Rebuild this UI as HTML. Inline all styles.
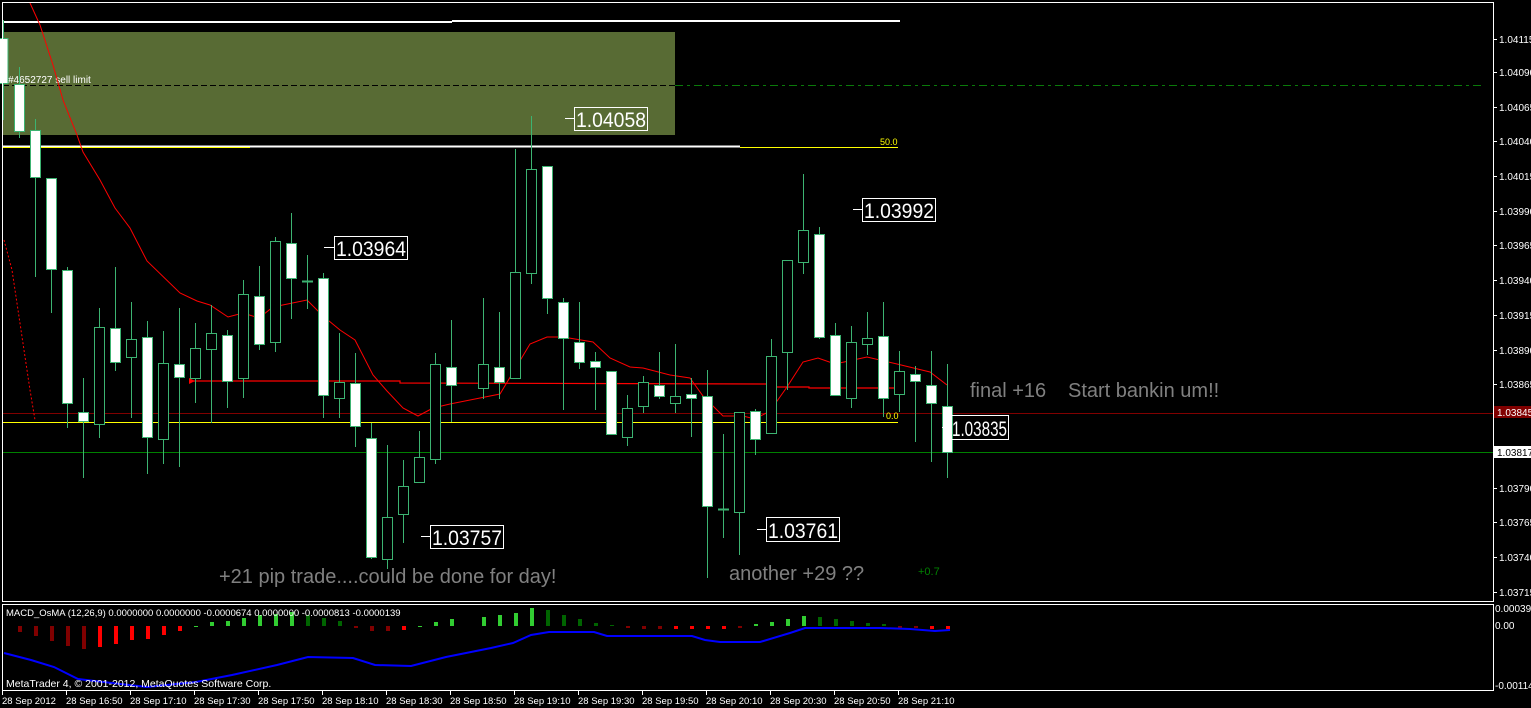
<!DOCTYPE html>
<html><head><meta charset="utf-8"><style>
html,body{margin:0;padding:0;background:#000;width:1531px;height:708px;overflow:hidden}
svg{display:block}
text{font-family:"Liberation Sans",sans-serif}
.ax{fill:#fff;font-size:10px}
.gt{fill:#808080;font-size:20px}
.lb{fill:#fff;font-size:21px}
</style></head><body>
<svg width="1531" height="708" viewBox="0 0 1531 708" xmlns="http://www.w3.org/2000/svg">
<rect width="1531" height="708" fill="#000"/>
<rect x="3" y="32" width="672" height="103" fill="#586b34"/>
<line x1="3" y1="22" x2="452" y2="22" stroke="#fff" stroke-width="2"/>
<line x1="452" y1="21" x2="900" y2="21" stroke="#fff" stroke-width="2"/>
<line x1="3" y1="85.5" x2="675" y2="85.5" stroke="#000" stroke-dasharray="6,3"/>
<line x1="675" y1="85.5" x2="1485" y2="85.5" stroke="#0a7a0a" stroke-dasharray="8,4,3,4"/>
<text x="8" y="83" style="font-size:10px" fill="#fff">#4652727 sell limit</text>
<line x1="3" y1="146.5" x2="740" y2="146.5" stroke="#fff" stroke-width="2"/>
<line x1="740" y1="147.5" x2="898" y2="147.5" stroke="#ffff00"/>
<line x1="3" y1="147.5" x2="250" y2="147.5" stroke="#ffff00"/>
<text x="880" y="145" fill="#ffff00" style="font-size:9px">50.0</text>
<line x1="3" y1="413.5" x2="1493" y2="413.5" stroke="#800000"/>
<line x1="3" y1="422.5" x2="898" y2="422.5" stroke="#ffff00"/>
<text x="886" y="419" fill="#ffff00" style="font-size:9px">0.0</text>
<line x1="3" y1="452.5" x2="1493" y2="452.5" stroke="#008000"/>
<polyline points="190,381 400,381 400,383 770,384 770,387 809,387 809,388 895,388" fill="none" stroke="#ff0000" stroke-width="1.2"/>
<path d="M189,378 L195,381 L189,384 Z" fill="#ff0000"/>
<polyline points="4,240 12,270 18,310 24,350 30,390 35,420" fill="none" stroke="#ff0000" stroke-dasharray="2,2"/>
<polyline points="30,3 40,25 53,65 63,100 77,135 83,152 100,180 115,208 130,228 147,261 180,293 197,301 210,305 228,317 243,313 259,318 273,307 307,300 323,316 340,330 355,340 373,375 387,391 403,408 418,416 433,408 450,404 470,400 500,394 530,344 547,337 563,337 593,342 610,358 630,367 643,368 670,375 690,378 703,396 723,416 743,416 755,419 770,411 787,387 803,362 818,358 835,364 867,357 897,364 930,372 947,385" fill="none" stroke="#ff0000" stroke-width="1"/>
<g stroke="#3cb371" stroke-width="1" shape-rendering="crispEdges">
<line x1="3.5" y1="20" x2="3.5" y2="120"/><rect x="-2" y="38.5" width="10" height="45" fill="#fff"/>
<line x1="19.5" y1="67" x2="19.5" y2="138"/><rect x="14.5" y="84.5" width="10" height="47" fill="#fff"/>
<line x1="35.5" y1="119" x2="35.5" y2="277"/><rect x="30.5" y="130.5" width="10" height="47" fill="#fff"/>
<line x1="51.5" y1="178" x2="51.5" y2="313"/><rect x="46.5" y="178.5" width="10" height="91" fill="#fff"/>
<line x1="67.5" y1="267" x2="67.5" y2="428"/><rect x="62.5" y="270.5" width="10" height="133" fill="#fff"/>
<line x1="83.5" y1="378" x2="83.5" y2="478"/><rect x="78.5" y="412.5" width="10" height="9" fill="#fff"/>
<line x1="99.5" y1="308" x2="99.5" y2="438"/><rect x="94.5" y="327.5" width="10" height="97" fill="#000"/>
<line x1="115.5" y1="267" x2="115.5" y2="371"/><rect x="110.5" y="328.5" width="10" height="34" fill="#fff"/>
<line x1="131.5" y1="302" x2="131.5" y2="418"/><rect x="126.5" y="339.5" width="10" height="18" fill="#000"/>
<line x1="147.5" y1="321" x2="147.5" y2="474"/><rect x="142.5" y="337.5" width="10" height="100" fill="#fff"/>
<line x1="163.5" y1="331" x2="163.5" y2="464"/><rect x="158.5" y="363.5" width="10" height="76" fill="#000"/>
<line x1="179.5" y1="308" x2="179.5" y2="467"/><rect x="174.5" y="364.5" width="10" height="13" fill="#fff"/>
<line x1="195.5" y1="323" x2="195.5" y2="403"/><rect x="190.5" y="348.5" width="10" height="30" fill="#000"/>
<line x1="211.5" y1="305" x2="211.5" y2="423"/><rect x="206.5" y="333.5" width="10" height="16" fill="#000"/>
<line x1="227.5" y1="330" x2="227.5" y2="408"/><rect x="222.5" y="335.5" width="10" height="46" fill="#fff"/>
<line x1="243.5" y1="280" x2="243.5" y2="398"/><rect x="238.5" y="294.5" width="10" height="84" fill="#000"/>
<line x1="259.5" y1="266" x2="259.5" y2="350"/><rect x="254.5" y="296.5" width="10" height="48" fill="#fff"/>
<line x1="275.5" y1="237" x2="275.5" y2="352"/><rect x="270.5" y="241.5" width="10" height="101" fill="#000"/>
<line x1="291.5" y1="213" x2="291.5" y2="319"/><rect x="286.5" y="243.5" width="10" height="35" fill="#fff"/>
<line x1="307.5" y1="255" x2="307.5" y2="309"/><line x1="302" y1="281.5" x2="313" y2="281.5" stroke-width="2"/>
<line x1="323.5" y1="273" x2="323.5" y2="418"/><rect x="318.5" y="278.5" width="10" height="117" fill="#fff"/>
<line x1="339.5" y1="333" x2="339.5" y2="418"/><rect x="334.5" y="382.5" width="10" height="16" fill="#000"/>
<line x1="355.5" y1="353" x2="355.5" y2="447"/><rect x="350.5" y="383.5" width="10" height="43" fill="#fff"/>
<line x1="371.5" y1="423" x2="371.5" y2="559"/><rect x="366.5" y="438.5" width="10" height="119" fill="#fff"/>
<line x1="387.5" y1="445" x2="387.5" y2="569"/><rect x="382.5" y="517.5" width="10" height="42" fill="#000"/>
<line x1="403.5" y1="460" x2="403.5" y2="543"/><rect x="398.5" y="486.5" width="10" height="28" fill="#000"/>
<line x1="419.5" y1="431" x2="419.5" y2="482"/><rect x="414.5" y="457.5" width="10" height="25" fill="#000"/>
<line x1="435.5" y1="353" x2="435.5" y2="464"/><rect x="430.5" y="364.5" width="10" height="95" fill="#000"/>
<line x1="451.5" y1="320" x2="451.5" y2="422"/><rect x="446.5" y="367.5" width="10" height="18" fill="#fff"/>
<line x1="483.5" y1="298" x2="483.5" y2="399"/><rect x="478.5" y="364.5" width="10" height="24" fill="#000"/>
<line x1="499.5" y1="312" x2="499.5" y2="399"/><rect x="494.5" y="367.5" width="10" height="15" fill="#fff"/>
<line x1="515.5" y1="149" x2="515.5" y2="378"/><rect x="510.5" y="272.5" width="10" height="106" fill="#000"/>
<line x1="531.5" y1="116" x2="531.5" y2="284"/><rect x="526.5" y="169.5" width="10" height="104" fill="#000"/>
<line x1="547.5" y1="166" x2="547.5" y2="314"/><rect x="542.5" y="166.5" width="10" height="132" fill="#fff"/>
<line x1="563.5" y1="298" x2="563.5" y2="410"/><rect x="558.5" y="302.5" width="10" height="36" fill="#fff"/>
<line x1="579.5" y1="302" x2="579.5" y2="369"/><rect x="574.5" y="342.5" width="10" height="20" fill="#fff"/>
<line x1="595.5" y1="352" x2="595.5" y2="410"/><rect x="590.5" y="361.5" width="10" height="6" fill="#fff"/>
<line x1="611.5" y1="371" x2="611.5" y2="434"/><rect x="606.5" y="371.5" width="10" height="63" fill="#fff"/>
<line x1="627.5" y1="395" x2="627.5" y2="446"/><rect x="622.5" y="408.5" width="10" height="29" fill="#000"/>
<line x1="643.5" y1="376" x2="643.5" y2="413"/><rect x="638.5" y="382.5" width="10" height="24" fill="#000"/>
<line x1="659.5" y1="352" x2="659.5" y2="399"/><rect x="654.5" y="385.5" width="10" height="11" fill="#fff"/>
<line x1="675.5" y1="344" x2="675.5" y2="413"/><rect x="670.5" y="396.5" width="10" height="7" fill="#000"/>
<line x1="691.5" y1="378" x2="691.5" y2="437"/><rect x="686.5" y="394.5" width="10" height="4" fill="#fff"/>
<line x1="707.5" y1="370" x2="707.5" y2="578"/><rect x="702.5" y="396.5" width="10" height="110" fill="#fff"/>
<line x1="723.5" y1="434" x2="723.5" y2="538"/><line x1="718" y1="509.5" x2="729" y2="509.5" stroke-width="2"/>
<line x1="739.5" y1="412" x2="739.5" y2="555"/><rect x="734.5" y="412.5" width="10" height="100" fill="#000"/>
<line x1="755.5" y1="409" x2="755.5" y2="455"/><rect x="750.5" y="411.5" width="10" height="28" fill="#fff"/>
<line x1="771.5" y1="339" x2="771.5" y2="433"/><rect x="766.5" y="356.5" width="10" height="77" fill="#000"/>
<line x1="787.5" y1="260" x2="787.5" y2="390"/><rect x="782.5" y="260.5" width="10" height="92" fill="#000"/>
<line x1="803.5" y1="174" x2="803.5" y2="274"/><rect x="798.5" y="230.5" width="10" height="32" fill="#000"/>
<line x1="819.5" y1="227" x2="819.5" y2="339"/><rect x="814.5" y="234.5" width="10" height="103" fill="#fff"/>
<line x1="835.5" y1="323" x2="835.5" y2="395"/><rect x="830.5" y="335.5" width="10" height="60" fill="#fff"/>
<line x1="851.5" y1="326" x2="851.5" y2="408"/><rect x="846.5" y="342.5" width="10" height="56" fill="#000"/>
<line x1="867.5" y1="312" x2="867.5" y2="355"/><rect x="862.5" y="338.5" width="10" height="6" fill="#000"/>
<line x1="883.5" y1="302" x2="883.5" y2="417"/><rect x="878.5" y="336.5" width="10" height="62" fill="#fff"/>
<line x1="899.5" y1="351" x2="899.5" y2="412"/><rect x="894.5" y="371.5" width="10" height="23" fill="#000"/>
<line x1="915.5" y1="366" x2="915.5" y2="442"/><rect x="910.5" y="374.5" width="10" height="7" fill="#fff"/>
<line x1="931.5" y1="351" x2="931.5" y2="462"/><rect x="926.5" y="385.5" width="10" height="18" fill="#fff"/>
<line x1="947.5" y1="364" x2="947.5" y2="478"/><rect x="942.5" y="406.5" width="10" height="46" fill="#fff"/>
</g>
<g stroke="#fff" fill="none" shape-rendering="crispEdges">
<line x1="565" y1="118.5" x2="574" y2="118.5"/><rect x="574.5" y="107.5" width="73" height="23"/>
<line x1="324" y1="247.5" x2="334" y2="247.5"/><rect x="334.5" y="236.5" width="73" height="23"/>
<line x1="421" y1="536.5" x2="430" y2="536.5"/><rect x="430.5" y="525.5" width="73" height="23"/>
<line x1="757" y1="529.5" x2="766" y2="529.5"/><rect x="766.5" y="517.5" width="73" height="24"/>
<line x1="853" y1="209.5" x2="862" y2="209.5"/><rect x="862.5" y="198.5" width="73" height="23"/>
<line x1="942" y1="427.5" x2="950" y2="427.5"/><rect x="950.5" y="415.5" width="58" height="24"/>
</g>
<g class="lb">
<text x="576" y="127" textLength="70" lengthAdjust="spacingAndGlyphs">1.04058</text>
<text x="336" y="256" textLength="70" lengthAdjust="spacingAndGlyphs">1.03964</text>
<text x="432" y="545" textLength="70" lengthAdjust="spacingAndGlyphs">1.03757</text>
<text x="768" y="538" textLength="70" lengthAdjust="spacingAndGlyphs">1.03761</text>
<text x="864" y="218" textLength="70" lengthAdjust="spacingAndGlyphs">1.03992</text>
<text x="952" y="436" textLength="55" lengthAdjust="spacingAndGlyphs">1.03835</text>
</g>
<text class="gt" x="219" y="583">+21 pip trade....could be done for day!</text>
<text class="gt" x="729" y="580">another +29 ??</text>
<text class="gt" x="970" y="397">final +16</text>
<text class="gt" x="1068" y="397">Start bankin um!!</text>
<text x="918" y="575" fill="#008000" style="font-size:11px">+0.7</text>
<rect x="2.5" y="2.5" width="1491" height="599" fill="none" stroke="#fff"/>
<rect x="2.5" y="604.5" width="1491" height="86" fill="none" stroke="#fff"/>
<g class="ax">
<text x="1499" y="43">1.04115</text><text x="1499" y="76">1.04090</text><text x="1499" y="111">1.04065</text>
<text x="1499" y="145">1.04040</text><text x="1499" y="180">1.04015</text><text x="1499" y="215">1.03990</text>
<text x="1499" y="249">1.03965</text><text x="1499" y="284">1.03940</text><text x="1499" y="319">1.03915</text>
<text x="1499" y="354">1.03890</text><text x="1499" y="388">1.03865</text><text x="1499" y="453">1.03840</text>
<text x="1499" y="492">1.03790</text><text x="1499" y="526">1.03765</text><text x="1499" y="561">1.03740</text>
<text x="1499" y="596">1.03715</text>
<text x="1495" y="612">0.000392</text><text x="1495" y="629">0.00</text><text x="1495" y="689">-0.00114</text>
</g>
<g stroke="#fff" shape-rendering="crispEdges">
<line x1="1493" y1="39.5" x2="1497" y2="39.5"/><line x1="1493" y1="72.5" x2="1497" y2="72.5"/><line x1="1493" y1="107.5" x2="1497" y2="107.5"/>
<line x1="1493" y1="141.5" x2="1497" y2="141.5"/><line x1="1493" y1="176.5" x2="1497" y2="176.5"/><line x1="1493" y1="211.5" x2="1497" y2="211.5"/>
<line x1="1493" y1="245.5" x2="1497" y2="245.5"/><line x1="1493" y1="280.5" x2="1497" y2="280.5"/><line x1="1493" y1="315.5" x2="1497" y2="315.5"/>
<line x1="1493" y1="350.5" x2="1497" y2="350.5"/><line x1="1493" y1="384.5" x2="1497" y2="384.5"/><line x1="1493" y1="488.5" x2="1497" y2="488.5"/>
<line x1="1493" y1="522.5" x2="1497" y2="522.5"/><line x1="1493" y1="557.5" x2="1497" y2="557.5"/><line x1="1493" y1="592.5" x2="1497" y2="592.5"/>
</g>
<rect x="1494" y="406" width="37" height="12" fill="#800000"/>
<text x="1497" y="416" fill="#fff" style="font-size:10px">1.03845</text>
<rect x="1494" y="446" width="37" height="12" fill="#fff"/>
<text x="1497" y="456" fill="#000" style="font-size:10px">1.03817</text>
<g shape-rendering="crispEdges">
<rect x="18" y="626" width="4" height="6" fill="#800000"/><rect x="34" y="626" width="4" height="10" fill="#800000"/>
<rect x="50" y="626" width="4" height="15" fill="#800000"/><rect x="66" y="626" width="4" height="20" fill="#800000"/>
<rect x="82" y="626" width="4" height="23" fill="#800000"/><rect x="98" y="626" width="4" height="21" fill="#ff0000"/>
<rect x="114" y="626" width="4" height="18" fill="#ff0000"/><rect x="130" y="626" width="4" height="14" fill="#ff0000"/>
<rect x="146" y="626" width="4" height="13" fill="#ff0000"/><rect x="162" y="626" width="4" height="9" fill="#ff0000"/>
<rect x="178" y="626" width="4" height="5" fill="#ff0000"/><rect x="194" y="626" width="4" height="1" fill="#32cd32"/>
<rect x="210" y="622" width="4" height="4" fill="#32cd32"/><rect x="226" y="621" width="4" height="5" fill="#32cd32"/>
<rect x="242" y="618" width="4" height="8" fill="#32cd32"/><rect x="258" y="615" width="4" height="11" fill="#32cd32"/>
<rect x="274" y="614" width="4" height="12" fill="#32cd32"/><rect x="290" y="612" width="4" height="14" fill="#32cd32"/>
<rect x="306" y="615" width="4" height="11" fill="#006400"/><rect x="322" y="618" width="4" height="8" fill="#006400"/>
<rect x="338" y="621" width="4" height="5" fill="#006400"/><rect x="354" y="626" width="4" height="2" fill="#800000"/>
<rect x="370" y="626" width="4" height="5" fill="#800000"/><rect x="386" y="626" width="4" height="5" fill="#800000"/>
<rect x="402" y="626" width="4" height="4" fill="#ff0000"/><rect x="418" y="626" width="4" height="1" fill="#32cd32"/>
<rect x="434" y="622" width="4" height="4" fill="#32cd32"/><rect x="450" y="619" width="4" height="7" fill="#32cd32"/>
<rect x="482" y="617" width="4" height="9" fill="#32cd32"/><rect x="498" y="615" width="4" height="11" fill="#32cd32"/>
<rect x="514" y="613" width="4" height="13" fill="#32cd32"/><rect x="530" y="608" width="4" height="18" fill="#32cd32"/>
<rect x="546" y="610" width="4" height="16" fill="#006400"/><rect x="562" y="615" width="4" height="11" fill="#006400"/>
<rect x="578" y="619" width="4" height="7" fill="#006400"/><rect x="594" y="623" width="4" height="3" fill="#006400"/>
<rect x="610" y="625" width="4" height="1" fill="#006400"/><rect x="626" y="626" width="4" height="2" fill="#800000"/>
<rect x="642" y="626" width="4" height="3" fill="#800000"/><rect x="658" y="626" width="4" height="3" fill="#800000"/>
<rect x="674" y="626" width="4" height="3" fill="#ff0000"/><rect x="690" y="626" width="4" height="3" fill="#ff0000"/>
<rect x="706" y="626" width="4" height="3" fill="#ff0000"/><rect x="722" y="626" width="4" height="3" fill="#ff0000"/>
<rect x="738" y="626" width="4" height="2" fill="#800000"/><rect x="754" y="624" width="4" height="2" fill="#32cd32"/>
<rect x="770" y="622" width="4" height="4" fill="#32cd32"/><rect x="786" y="619" width="4" height="7" fill="#32cd32"/>
<rect x="802" y="616" width="4" height="10" fill="#32cd32"/><rect x="818" y="617" width="4" height="9" fill="#006400"/>
<rect x="834" y="619" width="4" height="7" fill="#006400"/><rect x="850" y="621" width="4" height="5" fill="#006400"/>
<rect x="866" y="623" width="4" height="3" fill="#006400"/><rect x="882" y="624" width="4" height="2" fill="#006400"/>
<rect x="898" y="626" width="4" height="2" fill="#800000"/><rect x="914" y="626" width="4" height="2" fill="#800000"/>
<rect x="930" y="626" width="4" height="3" fill="#ff0000"/><rect x="946" y="626" width="4" height="3" fill="#ff0000"/>
</g>
<polyline points="4,653 31,660 54,667 78,679 112,683 147,687 196,682 232,675 277,665 308,657 353,658 375,665 411,666 446,657 491,648 513,643 531,635 549,632 594,632 607,636 692,636 705,640 720,642 760,642 790,633 805,628 880,628 910,629 935,631 950,630" fill="none" stroke="#0000ff" stroke-width="2"/>
<text x="6" y="616" fill="#fff" style="font-size:9.5px">MACD_OsMA (12,26,9) 0.0000000 0.0000000 -0.0000674 0.0000000 -0.0000813 -0.0000139</text>
<text x="6" y="687" fill="#fff" style="font-size:10.5px">MetaTrader 4, © 2001-2012, MetaQuotes Software Corp.</text>
<g stroke="#fff" shape-rendering="crispEdges">
<line x1="2.5" y1="691" x2="2.5" y2="695"/><line x1="66.5" y1="691" x2="66.5" y2="695"/><line x1="130.5" y1="691" x2="130.5" y2="695"/>
<line x1="194.5" y1="691" x2="194.5" y2="695"/><line x1="258.5" y1="691" x2="258.5" y2="695"/><line x1="322.5" y1="691" x2="322.5" y2="695"/>
<line x1="386.5" y1="691" x2="386.5" y2="695"/><line x1="450.5" y1="691" x2="450.5" y2="695"/><line x1="514.5" y1="691" x2="514.5" y2="695"/>
<line x1="578.5" y1="691" x2="578.5" y2="695"/><line x1="642.5" y1="691" x2="642.5" y2="695"/><line x1="706.5" y1="691" x2="706.5" y2="695"/>
<line x1="770.5" y1="691" x2="770.5" y2="695"/><line x1="834.5" y1="691" x2="834.5" y2="695"/><line x1="898.5" y1="691" x2="898.5" y2="695"/>
</g>
<g fill="#fff" style="font-size:9.5px">
<text x="2" y="704">28 Sep 2012</text><text x="66" y="704">28 Sep 16:50</text><text x="130" y="704">28 Sep 17:10</text>
<text x="194" y="704">28 Sep 17:30</text><text x="258" y="704">28 Sep 17:50</text><text x="322" y="704">28 Sep 18:10</text>
<text x="386" y="704">28 Sep 18:30</text><text x="450" y="704">28 Sep 18:50</text><text x="514" y="704">28 Sep 19:10</text>
<text x="578" y="704">28 Sep 19:30</text><text x="642" y="704">28 Sep 19:50</text><text x="706" y="704">28 Sep 20:10</text>
<text x="770" y="704">28 Sep 20:30</text><text x="834" y="704">28 Sep 20:50</text><text x="898" y="704">28 Sep 21:10</text>
</g>
</svg>
</body></html>
